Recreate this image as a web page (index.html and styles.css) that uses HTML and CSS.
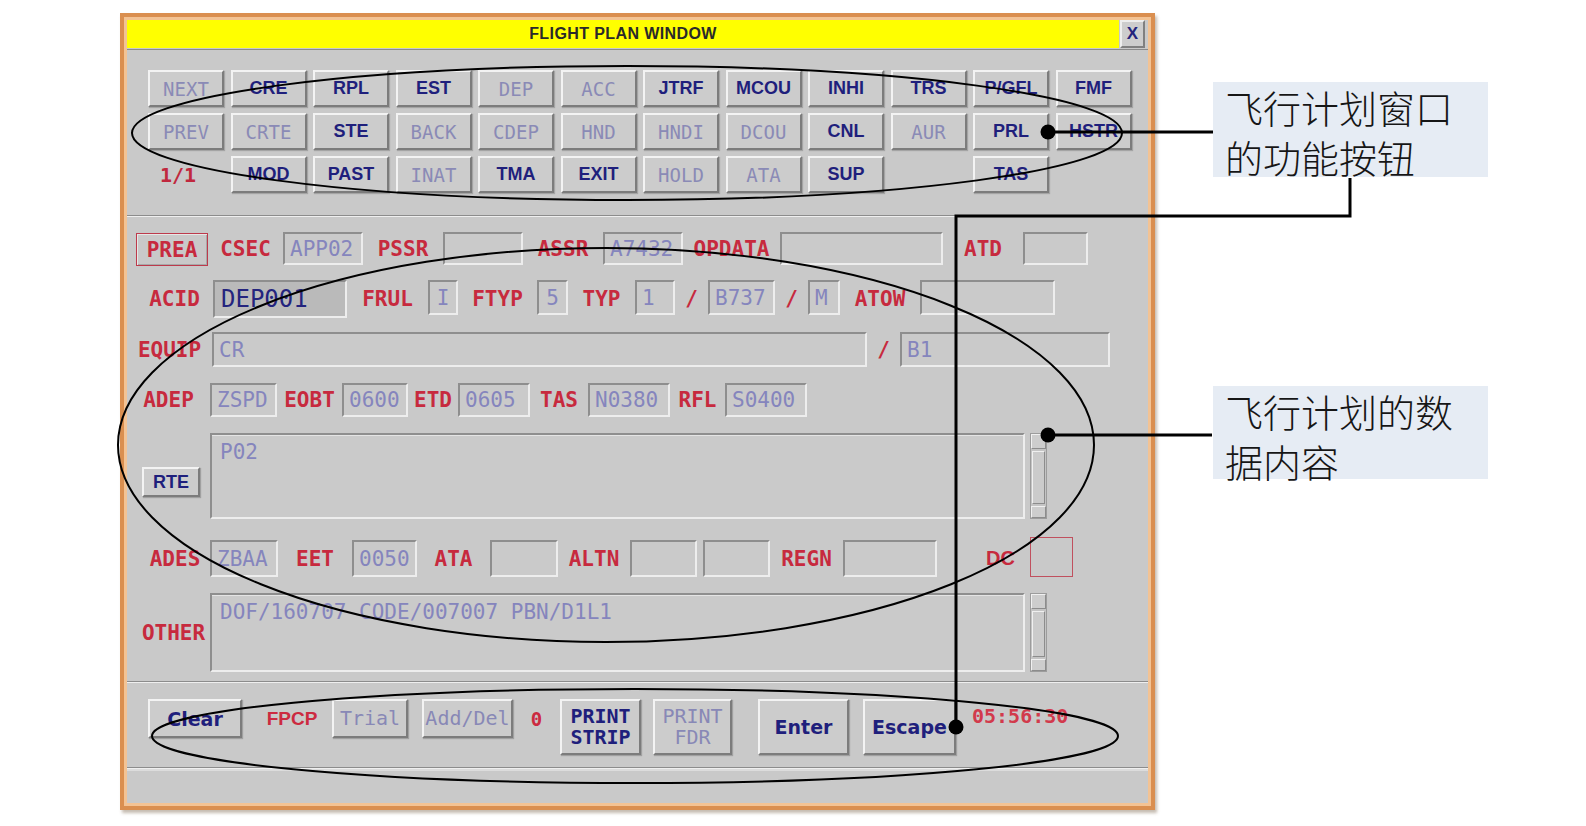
FILE: index.html
```html
<!DOCTYPE html>
<html>
<head>
<meta charset="utf-8">
<title>Flight Plan Window</title>
<link rel="stylesheet" href="styles.css">
</head>
<body>
<div class="page">
  <div class="window">
    <div class="titlebar">
      <div class="title">FLIGHT PLAN WINDOW</div>
      <div class="close">X</div>
    </div>

    <div class="btnpanel">
      <div class="btngrid">
        <div class="btn dis">NEXT</div>
        <div class="btn">CRE</div>
        <div class="btn">RPL</div>
        <div class="btn">EST</div>
        <div class="btn dis">DEP</div>
        <div class="btn dis">ACC</div>
        <div class="btn">JTRF</div>
        <div class="btn">MCOU</div>
        <div class="btn">INHI</div>
        <div class="btn">TRS</div>
        <div class="btn">P/GFL</div>
        <div class="btn">FMF</div>

        <div class="btn dis">PREV</div>
        <div class="btn dis">CRTE</div>
        <div class="btn">STE</div>
        <div class="btn dis">BACK</div>
        <div class="btn dis">CDEP</div>
        <div class="btn dis">HND</div>
        <div class="btn dis">HNDI</div>
        <div class="btn dis">DCOU</div>
        <div class="btn">CNL</div>
        <div class="btn dis">AUR</div>
        <div class="btn">PRL</div>
        <div class="btn">HSTR</div>

        <div class="page-count">1/1</div>
        <div class="btn">MOD</div>
        <div class="btn">PAST</div>
        <div class="btn dis">INAT</div>
        <div class="btn">TMA</div>
        <div class="btn">EXIT</div>
        <div class="btn dis">HOLD</div>
        <div class="btn dis">ATA</div>
        <div class="btn">SUP</div>
        <div class="cell-empty"></div>
        <div class="btn">TAS</div>
        <div class="cell-empty"></div>
      </div>
    </div>

    <div class="sep"></div>

    <div class="data">
      <div class="row r1">
        <div class="prea">PREA</div>
        <div class="lbl w75">CSEC</div>
        <div class="fld w80">APP02</div>
        <div class="lbl w80">PSSR</div>
        <div class="fld w80"></div>
        <div class="lbl w80">ASSR</div>
        <div class="fld w80">A7432</div>
        <div class="lbl w97">OPDATA</div>
        <div class="fld w163"></div>
        <div class="lbl w80">ATD</div>
        <div class="fld w65"></div>
      </div>

      <div class="row r2">
        <div class="lbl w77">ACID</div>
        <div class="fld acid">DEP001</div>
        <div class="lbl w81">FRUL</div>
        <div class="fld w30 ctr">I</div>
        <div class="lbl w79">FTYP</div>
        <div class="fld w31 ctr">5</div>
        <div class="lbl w67">TYP</div>
        <div class="fld w40">1</div>
        <div class="lbl w33">/</div>
        <div class="fld w67">B737</div>
        <div class="lbl w33">/</div>
        <div class="fld w32">M</div>
        <div class="lbl w80">ATOW</div>
        <div class="fld w135"></div>
      </div>

      <div class="row r3">
        <div class="lbl w85">EQUIP</div>
        <div class="fld w655">CR</div>
        <div class="lbl w33">/</div>
        <div class="fld w210">B1</div>
      </div>

      <div class="row r4">
        <div class="lbl w83">ADEP</div>
        <div class="fld w67">ZSPD</div>
        <div class="lbl w65">EOBT</div>
        <div class="fld w66">0600</div>
        <div class="lbl w50">ETD</div>
        <div class="fld w72">0605</div>
        <div class="lbl w58">TAS</div>
        <div class="fld w82">N0380</div>
        <div class="lbl w55">RFL</div>
        <div class="fld w82">S0400</div>
      </div>

      <div class="row block rte">
        <div class="side">
          <div class="rtebtn">RTE</div>
        </div>
        <div class="ta">P02</div>
        <div class="scroll">
          <div class="sc-up"></div>
          <div class="sc-thumb"></div>
          <div class="sc-down"></div>
        </div>
      </div>

      <div class="row r5">
        <div class="lbl w83 ades">ADES</div>
        <div class="fld w68">ZBAA</div>
        <div class="lbl w74">EET</div>
        <div class="fld w65">0050</div>
        <div class="lbl w73">ATA</div>
        <div class="fld w68"></div>
        <div class="lbl w72">ALTN</div>
        <div class="fld w67"></div>
        <div class="fld w67 gap6"></div>
        <div class="lbl w73">REGN</div>
        <div class="fld w94"></div>
        <div class="lbl w93 dc">DC</div>
        <div class="dcbox"></div>
      </div>

      <div class="row block other">
        <div class="lbl w83 otherlbl">OTHER</div>
        <div class="ta">DOF/160707 CODE/007007 PBN/D1L1</div>
        <div class="scroll">
          <div class="sc-up"></div>
          <div class="sc-thumb"></div>
          <div class="sc-down"></div>
        </div>
      </div>
    </div>

    <div class="sep"></div>

    <div class="actions">
      <div class="abtn short sans w94">Clear</div>
      <div class="alabel fpcp">FPCP</div>
      <div class="abtn short mono dis w76">Trial</div>
      <div class="abtn short mono dis w91 gap14">Add/Del</div>
      <div class="alabel zero">0</div>
      <div class="abtn tall mono bold w81">PRINT<br>STRIP</div>
      <div class="abtn tall mono dis w79 gap12">PRINT<br>FDR</div>
      <div class="abtn tall sans w91 gap26">Enter</div>
      <div class="abtn tall sans w93 gap14">Escape</div>
      <div class="clock">05:56:30</div>
    </div>

    <div class="sep"></div>

    <div class="status"></div>
  </div>

  <div class="notes">
    <div class="note n1">飞行计划窗口<br>的功能按钮</div>
    <div class="note n2">飞行计划的数<br>据内容</div>
  </div>

  <svg class="overlay" width="1586" height="826" viewBox="0 0 1586 826">
    <g fill="none" stroke="#000">
      <ellipse cx="627" cy="133" rx="495" ry="67" stroke-width="2"/>
      <ellipse cx="606" cy="445" rx="488" ry="197" stroke-width="2"/>
      <ellipse cx="635" cy="736" rx="483" ry="47" stroke-width="2"/>
      <path d="M1048,132 H1213" stroke-width="3"/>
      <path d="M1048,435 H1212" stroke-width="3"/>
      <path d="M956,727 V216 H1350 V178" stroke-width="3"/>
    </g>
    <g fill="#000">
      <circle cx="1048" cy="132" r="7.5"/>
      <circle cx="1048" cy="435" r="7.5"/>
      <circle cx="956" cy="727" r="7.5"/>
    </g>
  </svg>
</div>
</body>
</html>
```

FILE: styles.css
```css
* { box-sizing: border-box; }

html, body {
  margin: 0;
  padding: 0;
  background: #ffffff;
}

body {
  width: 1586px;
  height: 826px;
  overflow: hidden;
  position: relative;
  font-family: "Liberation Sans", Arial, sans-serif;
}

.page {
  display: flex;
  align-items: flex-start;
  padding: 17px 0 0 124px;
}

/* ---------- window frame ---------- */
.window {
  width: 1027px;
  height: 789px;
  border: 3px solid #f3c394;
  box-shadow: 0 0 0 4px #da8f50, 2px 3px 3px 4px rgba(90, 60, 30, 0.35);
  background: #c9c9c9;
  display: flex;
  flex-direction: column;
  flex: none;
}

.titlebar {
  height: 30px;
  display: flex;
  padding-bottom: 1px;
  border-bottom: 1px solid #8a8a8a;
  flex: none;
}

.title {
  flex: 1;
  background: #ffff00;
  display: flex;
  align-items: center;
  justify-content: center;
  font-weight: bold;
  font-size: 16px;
  letter-spacing: 0.4px;
  color: #2a2a2a;
}

.close {
  width: 25px;
  margin: 0 3px 0 1px;
  border: 2px solid;
  border-color: #eeeeee #808080 #808080 #eeeeee;
  background: #cdcdcd;
  display: flex;
  align-items: center;
  justify-content: center;
  font-weight: bold;
  font-size: 17px;
  color: #23237c;
}

.sep {
  height: 2px;
  border-top: 1px solid #8c8c8c;
  border-bottom: 1px solid #efefef;
  flex: none;
}

/* ---------- function buttons ---------- */
.btnpanel {
  height: 165px;
  padding: 20px 0 0 21px;
  flex: none;
}

.btngrid {
  display: grid;
  grid-template-columns: repeat(12, 76px);
  grid-auto-rows: 37px;
  column-gap: 6.5px;
  row-gap: 6px;
}

.btn {
  border: 2px solid;
  border-color: #f3f3f3 #7c7c7c #7c7c7c #f3f3f3;
  background: #cccccc;
  box-shadow: 1px 1px 1px rgba(0, 0, 0, 0.18);
  display: flex;
  align-items: center;
  justify-content: center;
  font-family: "Liberation Sans", Arial, sans-serif;
  font-weight: bold;
  font-size: 18px;
  color: #1f1f7c;
  white-space: nowrap;
}

.btn.dis {
  font-family: "DejaVu Sans Mono", monospace;
  font-weight: normal;
  font-size: 19px;
  color: #8a8ab6;
}

.page-count {
  display: flex;
  align-items: center;
  padding-left: 12px;
  font-family: "DejaVu Sans Mono", monospace;
  font-weight: bold;
  font-size: 20px;
  color: #c0283e;
}

/* ---------- data area ---------- */
.data {
  height: 464px;
  flex: none;
  display: flex;
  flex-direction: column;
}

.row {
  display: flex;
  align-items: flex-start;
  flex: none;
}

.r1 { margin-top: 15px; height: 33px; padding-left: 9px; }
.r2 { margin-top: 15px; height: 38px; padding-left: 9px; }
.r3 { margin-top: 14px; height: 35px; }
.r4 { margin-top: 16px; height: 34px; }
.rte { margin-top: 16px; height: 86px; }
.r5 { margin-top: 21px; height: 37px; }
.other { margin-top: 16px; height: 79px; }

.r2 .fld { height: 35px; }

.lbl {
  height: 100%;
  display: flex;
  align-items: center;
  justify-content: center;
  font-family: "DejaVu Sans Mono", monospace;
  font-weight: bold;
  font-size: 21px;
  color: #c72a3e;
  white-space: nowrap;
  flex: none;
}

.lbl.ades { padding-left: 13px; }
.lbl.dc { justify-content: flex-end; padding-right: 15px; font-family: "Liberation Sans", Arial, sans-serif; font-size: 20px; }
.otherlbl { padding-left: 10px; }

.fld {
  height: 100%;
  border: 2px solid;
  border-color: #8e8e8e #ededed #ededed #8e8e8e;
  background: #cacaca;
  display: flex;
  align-items: center;
  padding-left: 5px;
  font-family: "DejaVu Sans Mono", monospace;
  font-size: 21px;
  color: #8585bd;
  white-space: nowrap;
  overflow: hidden;
  flex: none;
}

.fld.ctr { justify-content: center; padding-left: 0; }

.fld.acid {
  width: 134px;
  height: 38px;
  background: #bababa;
  font-size: 24px;
  color: #24247e;
  padding-left: 6px;
}

.prea {
  width: 72px;
  height: 33px;
  margin-top: 1px;
  border: 1px solid #bd3a4c;
  box-shadow: inset 1px 1px 0 #e6e6e6, inset -1px -1px 0 #a8a8a8;
  display: flex;
  align-items: center;
  justify-content: center;
  font-family: "DejaVu Sans Mono", monospace;
  font-weight: bold;
  font-size: 21px;
  color: #c72a3e;
  flex: none;
}

.dcbox {
  width: 43px;
  height: 40px;
  margin-top: -3px;
  border: 1px solid #c0505e;
  flex: none;
}

.gap6 { margin-left: 6px; }
.gap12 { margin-left: 12px; }
.gap14 { margin-left: 14px; }
.gap26 { margin-left: 26px; }

.w30 { width: 30px; }
.w31 { width: 31px; }
.w32 { width: 32px; }
.w33 { width: 33px; }
.w40 { width: 40px; }
.w50 { width: 50px; }
.w55 { width: 55px; }
.w58 { width: 58px; }
.w65 { width: 65px; }
.w66 { width: 66px; }
.w67 { width: 67px; }
.w68 { width: 68px; }
.w72 { width: 72px; }
.w73 { width: 73px; }
.w74 { width: 74px; }
.w75 { width: 75px; }
.w76 { width: 76px; }
.w77 { width: 77px; }
.w79 { width: 79px; }
.w80 { width: 80px; }
.w81 { width: 81px; }
.w82 { width: 82px; }
.w83 { width: 83px; }
.w85 { width: 85px; }
.w91 { width: 91px; }
.w93 { width: 93px; }
.w94 { width: 94px; }
.w97 { width: 97px; }
.w135 { width: 135px; }
.w163 { width: 163px; }
.w210 { width: 210px; }
.w655 { width: 655px; }

.block { align-items: stretch; }

.side {
  width: 83px;
  padding: 34px 0 0 15px;
  flex: none;
}

.rtebtn {
  width: 58px;
  height: 30px;
  border: 2px solid;
  border-color: #f3f3f3 #7c7c7c #7c7c7c #f3f3f3;
  background: #cccccc;
  box-shadow: 1px 1px 1px rgba(0, 0, 0, 0.2);
  display: flex;
  align-items: center;
  justify-content: center;
  font-weight: bold;
  font-size: 18px;
  color: #1f1f7c;
}

.ta {
  width: 815px;
  border: 2px solid;
  border-color: #8e8e8e #ededed #ededed #8e8e8e;
  box-shadow: inset 0 1px 0 #e4e4e4;
  background: #cacaca;
  padding: 5px 8px;
  font-family: "DejaVu Sans Mono", monospace;
  font-size: 21px;
  line-height: 24px;
  color: #8585bd;
  white-space: pre;
  flex: none;
}

.scroll {
  width: 17px;
  margin-left: 5px;
  display: flex;
  flex-direction: column;
  border: 1px solid #9c9c9c;
  background: #c4c4c4;
  flex: none;
}

.sc-up, .sc-down {
  height: 15px;
  border: 1px solid;
  border-color: #f0f0f0 #8c8c8c #8c8c8c #f0f0f0;
  background: #cdcdcd;
}

.sc-down { height: 12px; }

.sc-thumb {
  flex: 1;
  margin: 2px 1px;
  border: 1px solid;
  border-color: #f0f0f0 #8c8c8c #8c8c8c #f0f0f0;
  background: #cbcbcb;
}

/* ---------- action bar ---------- */
.actions {
  height: 84px;
  padding: 16px 0 0 21px;
  display: flex;
  align-items: flex-start;
  flex: none;
}

.abtn {
  border: 2px solid;
  border-color: #f3f3f3 #7c7c7c #7c7c7c #f3f3f3;
  background: #cccccc;
  box-shadow: 1px 1px 1px rgba(0, 0, 0, 0.2);
  display: flex;
  align-items: center;
  justify-content: center;
  text-align: center;
  color: #1f1f7c;
  white-space: nowrap;
  flex: none;
}

.abtn.short { height: 39px; }
.abtn.tall { height: 56px; }

.abtn.sans {
  font-family: "DejaVu Sans", sans-serif;
  font-weight: bold;
  font-size: 19px;
}

.abtn.mono {
  font-family: "DejaVu Sans Mono", monospace;
  font-size: 20px;
  line-height: 21px;
}

.abtn.bold { font-weight: bold; }
.abtn.dis { color: #8888b6; }

.alabel {
  height: 39px;
  display: flex;
  align-items: center;
  justify-content: center;
  color: #cc2a40;
  flex: none;
}

.fpcp {
  width: 90px;
  padding-left: 10px;
  font-weight: bold;
  font-size: 19px;
}

.zero {
  width: 47px;
  font-family: "DejaVu Sans Mono", monospace;
  font-weight: bold;
  font-size: 19px;
}

.clock {
  margin-left: 16px;
  height: 34px;
  display: flex;
  align-items: center;
  font-family: "DejaVu Sans Mono", monospace;
  font-weight: bold;
  font-size: 20px;
  color: #d23a4c;
}

.status {
  flex: 1;
  box-shadow: inset 0 2px 0 #dcdcdc;
}

/* ---------- annotations ---------- */
.notes {
  margin-left: 62px;
  display: flex;
  flex-direction: column;
  flex: none;
}

.note {
  width: 275px;
  background: #e6ecf4;
  padding-left: 12px;
  font-family: "Noto Sans CJK SC", "Noto Sans CJK TC", sans-serif;
  font-weight: 300;
  font-size: 38px;
  line-height: 50px;
  color: #161616;
  white-space: nowrap;
}

.n1 { margin-top: 65px; height: 95px; }
.n2 { margin-top: 209px; height: 93px; }

.overlay {
  position: absolute;
  left: 0;
  top: 0;
  pointer-events: none;
}
```
